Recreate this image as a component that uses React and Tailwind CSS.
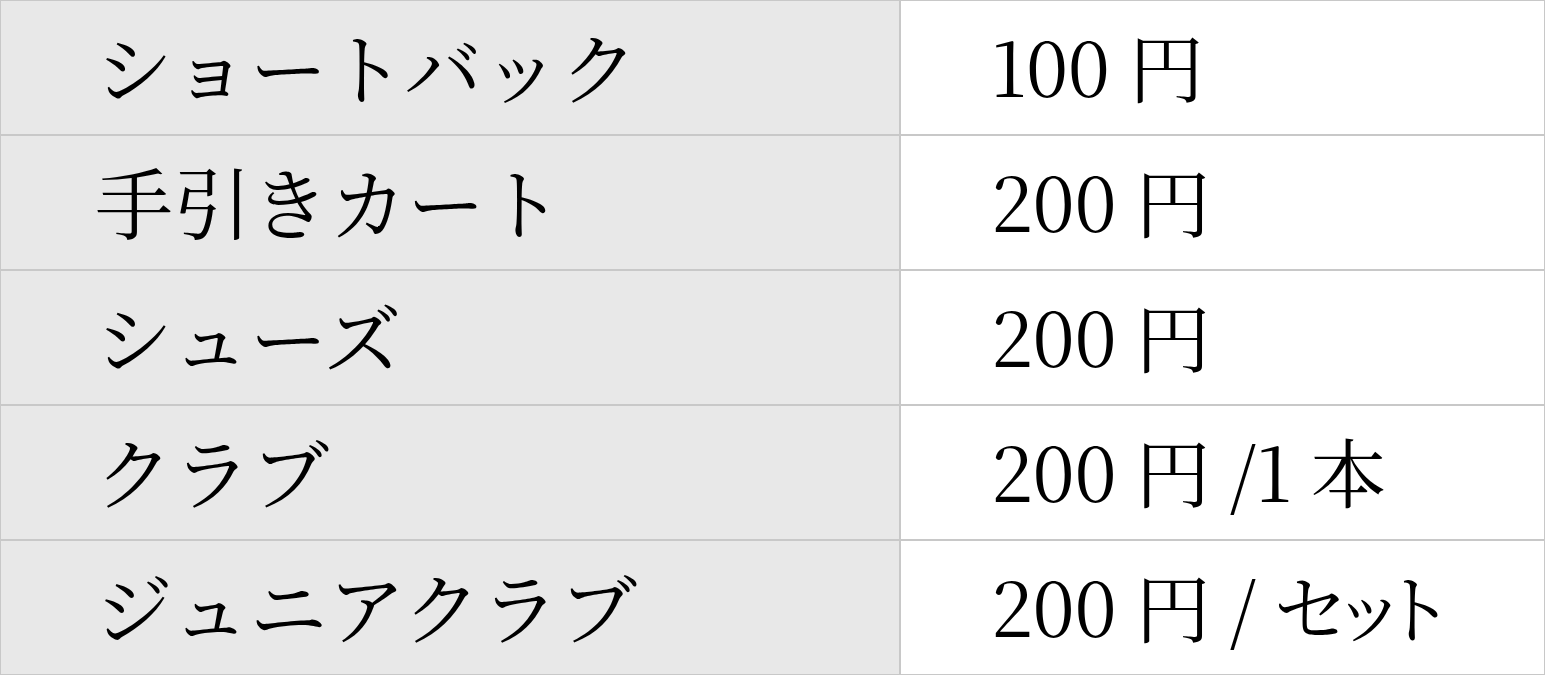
import React from 'react';

const rows = [
  { name: 'ショートバック', price: '100 円' },
  { name: '手引きカート', price: '200 円' },
  { name: 'シューズ', price: '200 円' },
  { name: 'クラブ', price: '200 円 /1 本' },
  { name: 'ジュニアクラブ', price: '200 円 / セット' },
];

const serif = { fontFamily: '"Noto Serif CJK JP", "IPAMincho", "Liberation Serif", "Noto Sans CJK JP", serif' };

const App = () => {
  return (
    <div className="w-[1545px] h-[675px] bg-white">
      <div className="flex flex-col w-full h-full border border-[#c8c8c8] bg-[#c8c8c8] gap-[2px]">
        {rows.map((row, index) => (
          <div key={index} className="flex flex-1 gap-[2px]">
            <div
              className="w-[898px] flex items-center pl-[94px] pb-[6px] bg-[#e8e8e8] text-black text-[78px] leading-none"
              style={serif}
            >
              {row.name}
            </div>
            <div
              className="flex-1 flex items-center pl-[90px] pb-[6px] bg-white text-black text-[75px] leading-none [font-feature-settings:'palt']"
              style={serif}
            >
              {row.price}
            </div>
          </div>
        ))}
      </div>
    </div>
  );
};

export default App;
